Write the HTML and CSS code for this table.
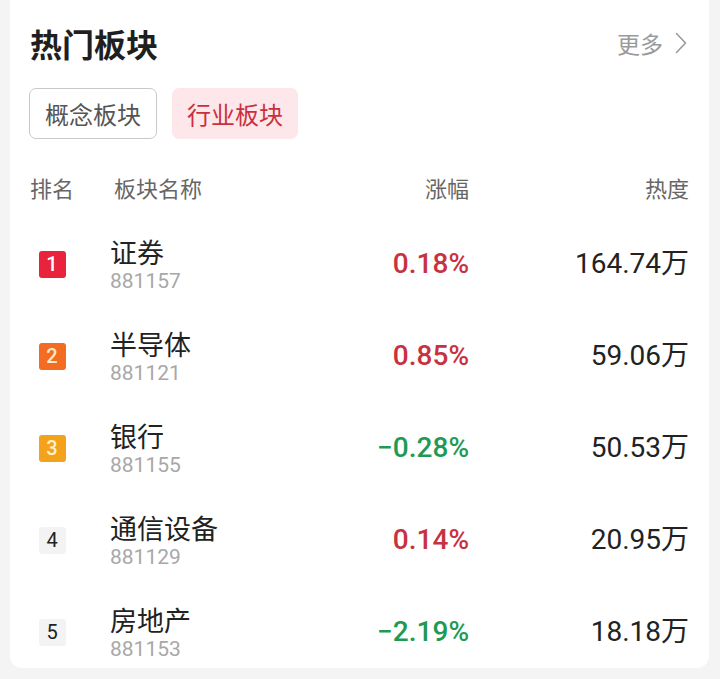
FILE: index.html
```html
<!DOCTYPE html>
<html lang="zh-CN">
<head>
<meta charset="utf-8">
<link rel="stylesheet" href="styles.css">
</head>
<body>
<div class="card">
  <div class="head">
    <h1 class="title">热门板块</h1>
    <a class="more">更多<svg class="chev" width="12" height="22" viewBox="0 0 12 22"><path d="M1.5 1.5 L10.5 11 L1.5 20.5" fill="none" stroke="#9a9a9a" stroke-width="1.6" stroke-linecap="round" stroke-linejoin="round"/></svg></a>
  </div>
  <div class="tabs">
    <span class="tab">概念板块</span>
    <span class="tab active">行业板块</span>
  </div>
  <div class="grid cols">
    <span class="c-rank">排名</span>
    <span class="c-name">板块名称</span>
    <span class="c-pct">涨幅</span>
    <span class="c-heat">热度</span>
  </div>
  <div class="rows">
    <div class="grid row">
      <span class="c-rank"><span class="badge b1">1</span></span>
      <span class="c-name"><span class="nm">证券</span><span class="code">881157</span></span>
      <span class="c-pct pct up">0.18%</span>
      <span class="c-heat heat">164.74万</span>
    </div>
    <div class="grid row">
      <span class="c-rank"><span class="badge b2">2</span></span>
      <span class="c-name"><span class="nm">半导体</span><span class="code">881121</span></span>
      <span class="c-pct pct up">0.85%</span>
      <span class="c-heat heat">59.06万</span>
    </div>
    <div class="grid row">
      <span class="c-rank"><span class="badge b3">3</span></span>
      <span class="c-name"><span class="nm">银行</span><span class="code">881155</span></span>
      <span class="c-pct pct down">−0.28%</span>
      <span class="c-heat heat">50.53万</span>
    </div>
    <div class="grid row">
      <span class="c-rank"><span class="badge bn">4</span></span>
      <span class="c-name"><span class="nm">通信设备</span><span class="code">881129</span></span>
      <span class="c-pct pct up">0.14%</span>
      <span class="c-heat heat">20.95万</span>
    </div>
    <div class="grid row">
      <span class="c-rank"><span class="badge bn">5</span></span>
      <span class="c-name"><span class="nm">房地产</span><span class="code">881153</span></span>
      <span class="c-pct pct down">−2.19%</span>
      <span class="c-heat heat">18.18万</span>
    </div>
  </div>
</div>
</body>
</html>
```

FILE: styles.css
```css
* { box-sizing: border-box; }
html, body { margin: 0; padding: 0; }
body {
  background: #f4f4f4;
  font-family: Roboto, "Noto Sans CJK SC", sans-serif;
  color: #222;
  width: 720px;
  height: 679px;
  overflow: hidden;
}
.card {
  margin-left: 10px;
  width: 699px;
  height: 668px;
  background: #fff;
  border-radius: 0 0 12px 12px;
  padding: 23px 20px 0 20px;
}
.head {
  display: flex;
  align-items: center;
  justify-content: space-between;
  height: 40px;
}
.title {
  margin: 0;
  font-family: "Noto Sans CJK SC", sans-serif;
  font-size: 32px;
  font-weight: 700;
  line-height: 40px;
  color: #1f1f1f;
}
.more {
  display: flex;
  align-items: center;
  gap: 12px;
  font-family: "Noto Sans CJK SC", sans-serif;
  font-size: 23px;
  color: #9a9a9a;
  line-height: 30px;
  margin-right: 2px;
}
.chev { display: block; }
.tabs {
  display: flex;
  gap: 15px;
  margin-top: 25px;
  margin-left: -1px;
}
.tab {
  display: flex;
  align-items: center;
  justify-content: center;
  width: 128px;
  height: 51px;
  border: 1px solid #c9c9c9;
  border-radius: 7px;
  font-family: "Noto Sans CJK SC", sans-serif;
  font-size: 24px;
  color: #555;
}
.tab.active {
  width: 126px;
  border-color: #fde7ea;
  background: #fde7ea;
  color: #c9303e;
}
.grid {
  display: grid;
  grid-template-columns: 44px 36px 1fr 150px 220px;
  align-items: center;
}
.c-rank { grid-column: 1; display: flex; justify-content: center; }
.c-name { grid-column: 3; }
.c-pct { grid-column: 4; text-align: right; }
.c-heat { grid-column: 5; text-align: right; }
.cols {
  margin-top: 32px;
  height: 30px;
  font-family: "Noto Sans CJK SC", sans-serif;
  font-size: 22px;
  color: #666;
}
.cols .c-name { padding-left: 4px; }
.rows {
  margin-top: 27px;
  display: flex;
  flex-direction: column;
  gap: 20px;
}
.row { height: 72px; }
.c-name {
  display: flex;
  flex-direction: column;
}
.nm {
  font-family: "Noto Sans CJK SC", sans-serif;
  font-size: 27px;
  line-height: 32px;
  color: #222;
}
.code {
  font-size: 21px;
  line-height: 24px;
  color: #a8a8a8;
  margin-top: 1px;
}
.badge {
  display: flex;
  align-items: center;
  justify-content: center;
  width: 27px;
  height: 27px;
  border-radius: 3px;
  font-size: 20px;
  font-weight: 500;
  color: #fff;
}
.b1 { background: #e8233b; }
.b2 { background: #f26c22; color: #fde6d2; }
.b3 { background: #f4a11b; color: #fff1c9; }
.bn { background: #f3f3f3; color: #222; font-weight: 400; }
.pct {
  font-size: 28px;
  font-weight: 500;
  line-height: 32px;
}
.up { color: #c8323f; }
.down { color: #1e9a55; }
.heat {
  font-family: Roboto, "Noto Sans CJK SC", sans-serif;
  font-size: 28px;
  line-height: 32px;
  color: #222;
}
```
